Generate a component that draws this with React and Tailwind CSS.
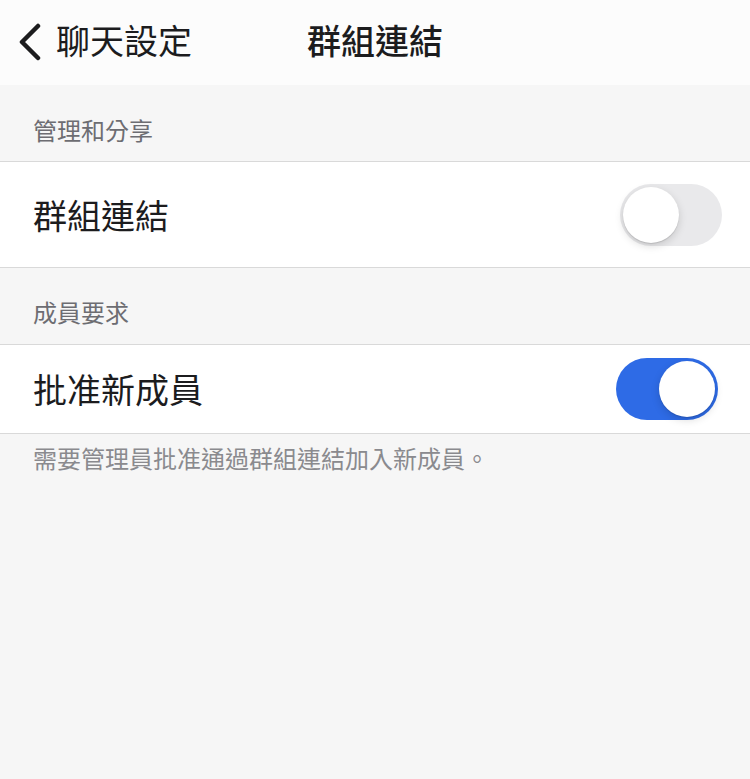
import React, { useState } from "react";

const font = { fontFamily: '"Noto Sans CJK TC", "Noto Sans", sans-serif' };

function Toggle({ on, onClick }) {
  return (
    <button
      onClick={onClick}
      className={`relative w-[102px] h-[62px] rounded-full p-[3px] flex items-center ${
        on ? "bg-[#2e6be6] justify-end" : "bg-[#e9e9eb] justify-start"
      }`}
    >
      <span className="w-[56px] h-[56px] rounded-full bg-white shadow-[0_3px_8px_rgba(0,0,0,0.15),0_1px_1px_rgba(0,0,0,0.12)]" />
    </button>
  );
}

export default function App() {
  const [linkOn, setLinkOn] = useState(false);
  const [approveOn, setApproveOn] = useState(true);

  return (
    <div className="w-[750px] h-[779px] bg-[#f6f6f6] text-[#1c1c1e]" style={font}>
      {/* header */}
      <div className="relative h-[85px] bg-[#fcfcfc] flex items-center pb-[6px]">
        <div className="flex items-center pl-[17px] gap-[14px]">
          <svg width="25" height="38" viewBox="0 0 25 38" fill="none" className="mt-[4px]">
            <path d="M21 3 L5 19 L21 35" stroke="#1c1c1e" strokeWidth="4.5" strokeLinecap="round" strokeLinejoin="round" />
          </svg>
          <span className="text-[34px] leading-none">聊天設定</span>
        </div>
        <div className="absolute left-0 right-0 flex justify-center pointer-events-none">
          <span className="text-[34px] leading-none font-medium">群組連結</span>
        </div>
      </div>

      {/* section 1 */}
      <div className="h-[76px] flex items-end pb-[19px] pl-[33px] text-[24px] leading-none text-[#6d6d72]">
        管理和分享
      </div>
      <div className="h-[107px] bg-white border-y border-[#d9d9d9] flex items-center justify-between pl-[33px] pr-[28px]">
        <span className="text-[34px] leading-none">群組連結</span>
        <Toggle on={linkOn} onClick={() => setLinkOn(!linkOn)} />
      </div>

      {/* section 2 */}
      <div className="h-[76px] flex items-end pb-[20px] pl-[33px] text-[24px] leading-none text-[#6d6d72]">
        成員要求
      </div>
      <div className="h-[90px] bg-white border-y border-[#d9d9d9] flex items-center justify-between pl-[33px] pr-[32px]">
        <span className="text-[34px] leading-none">批准新成員</span>
        <Toggle on={approveOn} onClick={() => setApproveOn(!approveOn)} />
      </div>
      <div className="pt-[12px] pl-[33px] text-[24px] leading-none text-[#8a8a8e]">
        需要管理員批准通過群組連結加入新成員。
      </div>
    </div>
  );
}
